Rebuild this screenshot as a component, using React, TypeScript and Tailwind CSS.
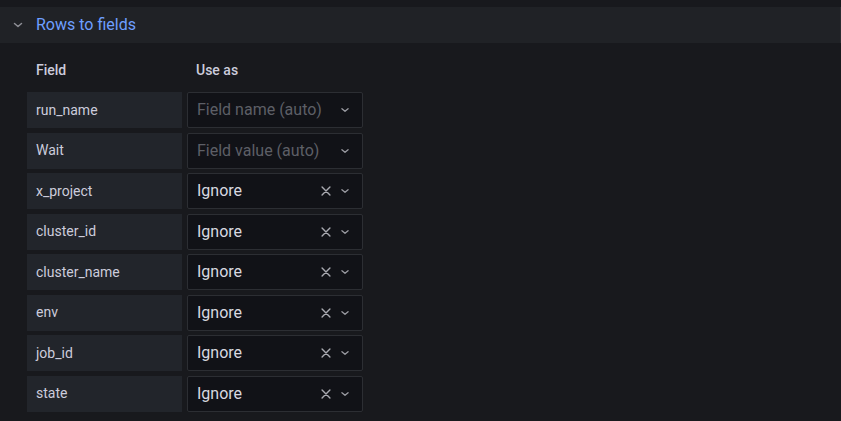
import React from "react";

type Row = { name: string; value: string; placeholder?: boolean };

const rows: Row[] = [
  { name: "run_name", value: "Field name (auto)", placeholder: true },
  { name: "Wait", value: "Field value (auto)", placeholder: true },
  { name: "x_project", value: "Ignore" },
  { name: "cluster_id", value: "Ignore" },
  { name: "cluster_name", value: "Ignore" },
  { name: "env", value: "Ignore" },
  { name: "job_id", value: "Ignore" },
  { name: "state", value: "Ignore" },
];

const Chevron = ({ className }: { className?: string }) => (
  <svg className={className} viewBox="0 0 16 16" fill="none" stroke="currentColor" strokeWidth="1.5" strokeLinecap="round" strokeLinejoin="round">
    <path d="M4.5 6.5 8 9.5l3.5-3" />
  </svg>
);

const Cross = () => (
  <svg className="w-[14px] h-[14px]" viewBox="0 0 16 16" fill="none" stroke="currentColor" strokeWidth="1.6" strokeLinecap="round">
    <path d="M3.5 3.5l9 9M12.5 3.5l-9 9" />
  </svg>
);

const App = () => {
  return (
    <div className="w-[841px] h-[421px] overflow-hidden bg-[#18191d] pt-[7px]" style={{ fontFamily: "Roboto, 'Noto Sans', sans-serif" }}>
      <div className="h-[36px] bg-[#202226] flex items-center pl-[10px] border-r border-[#2a2c31]">
        <Chevron className="w-[16px] h-[16px] text-[#8e8f96]" />
        <span className="ml-[10px] text-[16px] text-[#6e9fff]">Rows to fields</span>
      </div>

      <div className="pl-[27px] pt-[17px]">
        <div className="flex text-[14px] font-medium text-[#ccccdc] h-[20px] items-center">
          <div className="w-[160px] pl-[9px]">Field</div>
          <div className="pl-[9px]">Use as</div>
        </div>

        <div className="flex flex-col gap-[4.5px] mt-[12px]">
          {rows.map((r) => (
            <div key={r.name} className="flex h-[36px] gap-[5px]">
              <div className="w-[155px] bg-[#22252b] flex items-center pl-[9px] text-[14px] text-[#ccccdc]">
                {r.name}
              </div>
              <div className="w-[176px] bg-[#111217] border border-[#2c2e33] rounded-[2px] flex items-center pl-[9px] pr-[10px]">
                <span className={r.placeholder ? "text-[16px] text-[#5d5f66] flex-1" : "text-[16px] text-[#d8d9e0] flex-1"}>
                  {r.value}
                </span>
                {!r.placeholder && (
                  <span className="text-[#a8a9b0] mr-[5px] flex items-center">
                    <Cross />
                  </span>
                )}
                <Chevron className="w-[14px] h-[14px] text-[#9a9ba2]" />
              </div>
            </div>
          ))}
        </div>
      </div>
    </div>
  );
};

export default App;
